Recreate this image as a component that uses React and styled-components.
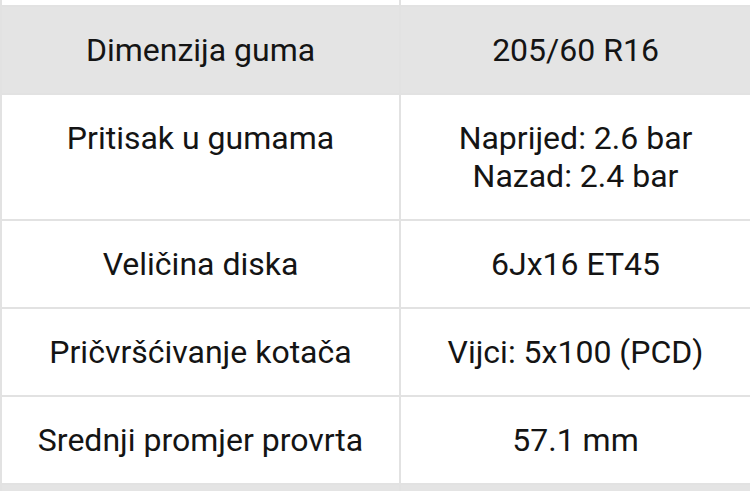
import React from 'react';
import styled, { createGlobalStyle } from 'styled-components';

const GlobalStyle = createGlobalStyle`
	body {
		margin: 0;
		background: #ffffff;
		font-family: Roboto, "Liberation Sans", sans-serif;
	}
`;

const Table = styled.table`
	width: 750px;
	border-collapse: collapse;
	table-layout: fixed;
`;

const Row = styled.tr`
	background: ${(p) => (p.$shaded ? '#e4e4e4' : '#ffffff')};
`;

const Cell = styled.td`
	border: 2px solid #e2e2e2;
	padding: ${(p) => (p.$stub ? '0' : '24px 10px')};
	height: ${(p) => (p.$stub ? '5px' : 'auto')};
	text-align: center;
	vertical-align: top;
	font-size: 32px;
	line-height: normal;
	color: #141414;
	border-top-width: ${(p) => (p.$stub ? '0' : '2px')};
	border-bottom-width: ${(p) => (p.$stub ? '0' : '2px')};
`;

const rows = [
	{ label: 'Dimenzija guma', value: ['205/60 R16'], shaded: true },
	{ label: 'Pritisak u gumama', value: ['Naprijed: 2.6 bar', 'Nazad: 2.4 bar'] },
	{ label: 'Veličina diska', value: ['6Jx16 ET45'] },
	{ label: 'Pričvršćivanje kotača', value: ['Vijci: 5x100 (PCD)'] },
	{ label: 'Srednji promjer provrta', value: ['57.1 mm'] },
];

export default function App() {
	return (
		<>
			<GlobalStyle />
			<Table>
				<colgroup>
					<col style={{ width: '399px' }} />
					<col style={{ width: '351px' }} />
				</colgroup>
				<tbody>
					<Row>
						<Cell $stub />
						<Cell $stub />
					</Row>
					{rows.map((r) => (
						<Row key={r.label} $shaded={r.shaded}>
							<Cell>{r.label}</Cell>
							<Cell>
								{r.value.map((v, i) => (
									<div key={i}>{v}</div>
								))}
							</Cell>
						</Row>
					))}
					<Row $shaded>
						<Cell>&nbsp;</Cell>
						<Cell>&nbsp;</Cell>
					</Row>
				</tbody>
			</Table>
		</>
	);
}
